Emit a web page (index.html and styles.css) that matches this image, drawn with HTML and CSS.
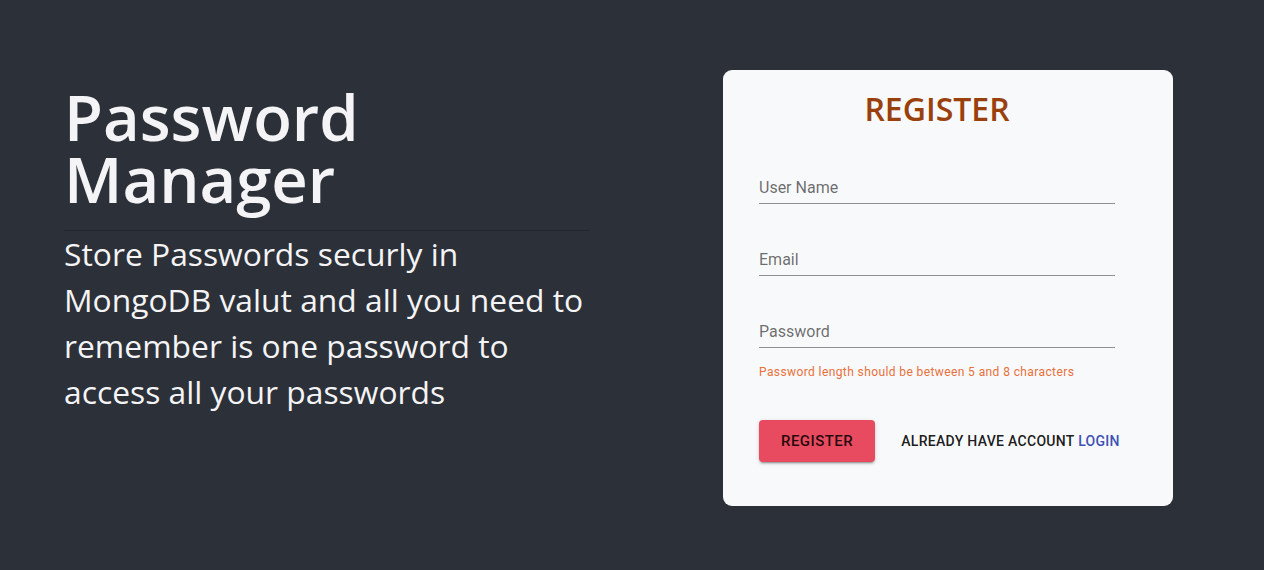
FILE: index.html
```html
<!DOCTYPE html>
<html lang="en">
<head>
<meta charset="utf-8">
<title>Password Manager</title>
<link rel="stylesheet" href="styles.css">
</head>
<body>
<main class="page">
  <section class="intro">
    <h1 class="intro-title">Password<br>Manager</h1>
    <hr class="intro-rule">
    <p class="intro-text">Store Passwords securly in MongoDB valut and all you need to remember is one password to access all your passwords</p>
  </section>
  <section class="card">
    <h2 class="card-title">REGISTER</h2>
    <form class="form">
      <div class="field"><label class="field-label">User Name</label></div>
      <div class="field"><label class="field-label">Email</label></div>
      <div class="field"><label class="field-label">Password</label></div>
      <p class="helper">Password length should be between 5 and 8 characters</p>
      <div class="actions">
        <button type="button" class="btn">REGISTER</button>
        <span class="switch">ALREADY HAVE ACCOUNT <a class="switch-link">LOGIN</a></span>
      </div>
    </form>
  </section>
</main>
</body>
</html>
```
FILE: styles.css
```css
html, body {
  margin: 0;
  padding: 0;
  background: #2c3038;
  height: 100%;
}
.page {
  display: flex;
  align-items: flex-start;
  gap: 133px;
  padding: 70px 0 0 64px;
  font-family: "Open Sans", sans-serif;
}
.intro {
  width: 526px;
  padding-top: 16px;
  color: #f4f4f6;
}
.intro-title {
  margin: 0;
  font-size: 63.4px;
  line-height: 62px;
  font-weight: 600;
}
.intro-rule {
  margin: 20px 0 0;
  border: 0;
  border-top: 1px solid rgba(0, 0, 0, 0.18);
  height: 0;
}
.intro-text {
  margin: 0;
  font-size: 31.8px;
  line-height: 46px;
  font-weight: 400;
}
.card {
  height: 436px;
  box-sizing: border-box;
  width: 450px;
  padding: 20px 58px 0 36px;
  background: #f8f9fb;
  border-radius: 9px;
}
.card-title {
  margin: 0;
  text-align: center;
  font-size: 32px;
  line-height: 38px;
  font-weight: 600;
  color: #9a400c;
}
.form {
  margin-top: 28px;
  display: flex;
  flex-direction: column;
}
.field {
  height: 48px;
  display: flex;
  flex-direction: column;
  justify-content: flex-end;
  margin-bottom: 24px;
  font-family: Roboto, sans-serif;
}
.field:nth-child(3) {
  margin-bottom: 0;
}
.field-label {
  font-size: 16px;
  line-height: 23px;
  color: rgba(0, 0, 0, 0.58);
  padding-bottom: 4px;
  border-bottom: 1px solid rgba(0, 0, 0, 0.42);
}
.helper {
  margin: 14px 0 0;
  font-family: Roboto, sans-serif;
  font-size: 12px;
  line-height: 20px;
  color: #e8703a;
  letter-spacing: 0.4px;
}
.actions {
  margin-top: 38px;
  display: flex;
  align-items: center;
  gap: 26px;
  font-family: Roboto, sans-serif;
}
.btn {
  flex: none;
  height: 42px;
  padding: 0 22px;
  border: 0;
  border-radius: 4px;
  background: #e84a5f;
  color: rgba(0, 0, 0, 0.87);
  font-family: Roboto, sans-serif;
  font-size: 15px;
  font-weight: 500;
  letter-spacing: 0.46px;
  box-shadow: 0 3px 1px -2px rgba(0,0,0,0.2), 0 2px 2px 0 rgba(0,0,0,0.14), 0 1px 5px 0 rgba(0,0,0,0.12);
}
.switch {
  white-space: nowrap;
  font-size: 14px;
  font-weight: 500;
  letter-spacing: 0.3px;
  color: rgba(0, 0, 0, 0.9);
}
.switch-link {
  color: #3f51b5;
}
```
